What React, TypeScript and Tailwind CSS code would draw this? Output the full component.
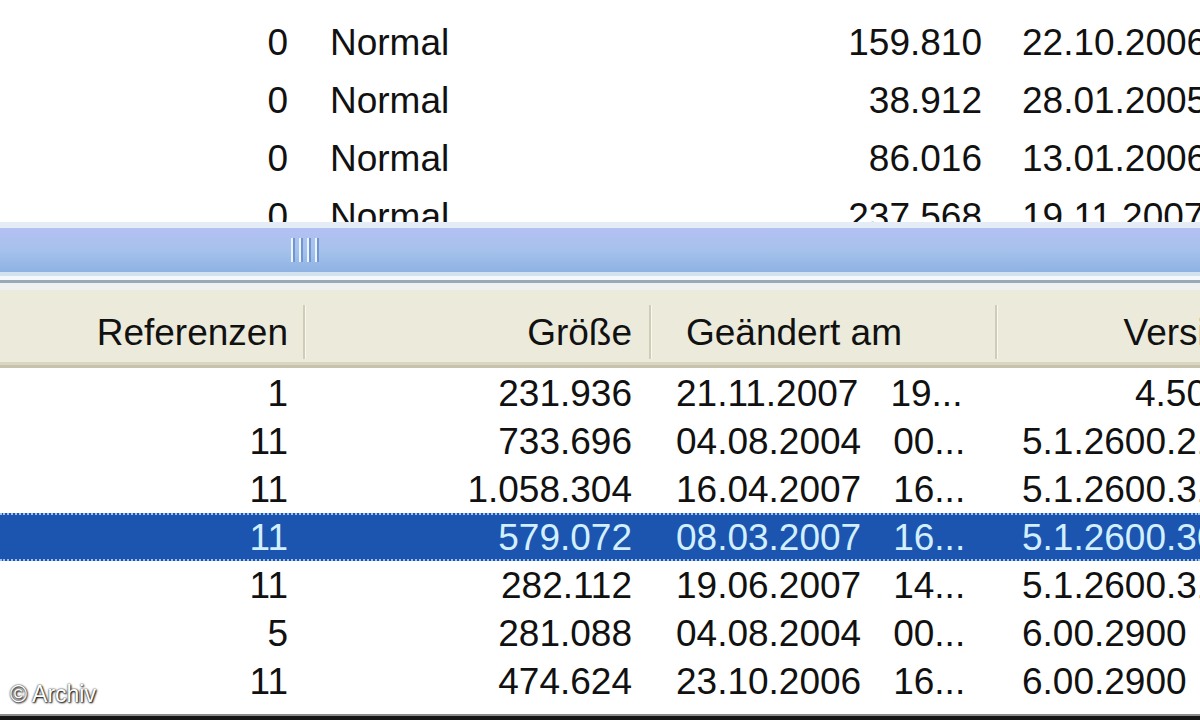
import React from "react";

type Row = {
  refs: string;
  size: string;
  date: string;
  time: string;
  version: string;
  right?: boolean;
  selected?: boolean;
};

const topRows = [
  { n: "0", attr: "Normal", size: "159.810", date: "22.10.2006" },
  { n: "0", attr: "Normal", size: "38.912", date: "28.01.2005" },
  { n: "0", attr: "Normal", size: "86.016", date: "13.01.2006" },
  { n: "0", attr: "Normal", size: "237.568", date: "19.11.2007" },
];

const rows: Row[] = [
  { refs: "1", size: "231.936", date: "21.11.2007", time: "19...", version: "4.50", right: true },
  { refs: "11", size: "733.696", date: "04.08.2004", time: "00...", version: "5.1.2600.2180" },
  { refs: "11", size: "1.058.304", date: "16.04.2007", time: "16...", version: "5.1.2600.3132" },
  { refs: "11", size: "579.072", date: "08.03.2007", time: "16...", version: "5.1.2600.3099", selected: true },
  { refs: "11", size: "282.112", date: "19.06.2007", time: "14...", version: "5.1.2600.3157" },
  { refs: "5", size: "281.088", date: "04.08.2004", time: "00...", version: "6.00.2900" },
  { refs: "11", size: "474.624", date: "23.10.2006", time: "16...", version: "6.00.2900" },
];

function HeaderSep() {
  return <div className="w-[3px] h-[54px] shrink-0 border-l-[2px] border-[#cfccb8] bg-[#f8f7f0]" />;
}

export default function App() {
  return (
    <div className="relative w-[1200px] h-[720px] overflow-hidden bg-white text-[37px] text-[#111] font-['Liberation_Sans',Tahoma,sans-serif] flex flex-col">
      {/* upper list, scrolled */}
      <div className="h-[222px] shrink-0 overflow-hidden pt-[13px]">
        {topRows.map((r, i) => (
          <div key={i} className="flex h-[58px] items-center whitespace-nowrap leading-none">
            <div className="w-[306px] shrink-0 text-right pr-[18px]">{r.n}</div>
            <div className="w-[400px] shrink-0 pl-[24px]">{r.attr}</div>
            <div className="w-[294px] shrink-0 text-right pr-[18px]">{r.size}</div>
            <div className="shrink-0 pl-[22px]">{r.date}</div>
          </div>
        ))}
      </div>

      {/* horizontal scrollbar / splitter */}
      <div className="h-[68px] shrink-0 flex flex-col">
        <div className="h-[6px] bg-[#e4edf6]" />
        <div className="h-[44px] flex items-center pl-[291px] bg-gradient-to-b from-[#b4c0f2] via-[#a6c2ec] to-[#8eb2e3]">
          <div className="flex gap-[4px]">
            {[0, 1, 2, 3].map((i) => (
              <div key={i} className="w-[4px] h-[24px] bg-[#eaf5ff] border-r-[2px] border-[#7096d2]" />
            ))}
          </div>
        </div>
        <div className="h-[4px] bg-[#d2e3ef]" />
        <div className="h-[4px] bg-[#f4f8fa]" />
        <div className="h-[3px] bg-[#98a9b8]" />
        <div className="h-[7px] bg-[#eef1f0]" />
      </div>

      {/* column header */}
      <div className="h-[78px] shrink-0 flex flex-col bg-[#ebeadb]">
        <div className="h-[72px] flex items-center pt-[12px] whitespace-nowrap leading-none">
          <div className="w-[303px] shrink-0 text-right pr-[15px]">Referenzen</div>
          <HeaderSep />
          <div className="w-[343px] shrink-0 text-right pr-[17px]">Größe</div>
          <HeaderSep />
          <div className="w-[343px] shrink-0 pl-[34px]">Geändert am</div>
          <HeaderSep />
          <div className="w-[267px] shrink-0 text-right pr-[18px]">Version</div>
        </div>
        <div className="h-[3px] bg-[#d9d6c3]" />
        <div className="h-[3px] bg-[#c6c2ac]" />
      </div>

      {/* lower list */}
      <div className="h-[340px] shrink-0 pt-[1px]">
        {rows.map((r, i) => (
          <div
            key={i}
            className={
              r.selected
                ? "flex h-[48px] items-center whitespace-nowrap leading-none bg-[#1b55b0] text-[#d2efff] border-y-[2px] border-dotted border-[#9cc0ee]"
                : "flex h-[48px] items-center whitespace-nowrap leading-none"
            }
          >
            <div className="w-[306px] shrink-0 text-right pr-[18px]">{r.refs}</div>
            <div className="w-[346px] shrink-0 text-right pr-[20px]">{r.size}</div>
            <div className="w-[346px] shrink-0 pl-[24px] flex">
              <span>{r.date}</span>
              <span className="ml-[32px]">{r.time}</span>
            </div>
            <div className={r.right ? "w-[260px] shrink-0 text-right pr-[51px]" : "w-[260px] shrink-0 pl-[24px]"}>
              {r.version}
            </div>
          </div>
        ))}
      </div>

      <div className="flex-1" />
      <div className="h-[6px] shrink-0 border-t-[2px] border-[#8c8c8c] bg-[#161616]" />

      <div className="absolute left-[10px] bottom-[14px] text-[23px] leading-none text-white font-['Liberation_Sans',Arial,sans-serif] [text-shadow:0_0_2px_#000,1px_1px_2px_#000]">
        © Archiv
      </div>
    </div>
  );
}
